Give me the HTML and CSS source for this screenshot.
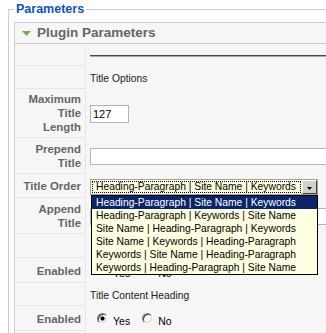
FILE: index.html
```html
<!DOCTYPE html>
<html>
<head>
<meta charset="utf-8">
<link rel="stylesheet" href="styles.css">
</head>
<body>
<fieldset class="params-fieldset">
  <legend class="params-legend">Parameters</legend>
  <div class="panel">
    <h3 class="panel-title">
      <svg class="panel-arrow" width="9" height="5" viewBox="0 0 9 5"><polygon points="0,0 9,0 4.5,5" fill="#6fb24c"/></svg>
      <span>Plugin Parameters</span>
    </h3>
    <div class="paramlist">
      <div class="param param--rule">
        <div class="param-key"></div>
        <div class="param-value"><hr class="param-hr"></div>
      </div>
      <div class="param">
        <div class="param-key"></div>
        <div class="param-value">Title Options</div>
      </div>
      <div class="param param--tall">
        <div class="param-key">Maximum Title Length</div>
        <div class="param-value"><input class="text-input text-input--short" type="text" value="127"></div>
      </div>
      <div class="param">
        <div class="param-key">Prepend Title</div>
        <div class="param-value"><input class="text-input text-input--long" type="text" value=""></div>
      </div>
      <div class="param param--field">
        <div class="param-key">Title Order</div>
        <div class="param-value">
          <div class="select">
            <span class="select-value">Heading-Paragraph | Site Name | Keywords</span>
            <span class="select-btn"><svg width="5" height="3" viewBox="0 0 5 3"><polygon points="0,0 5,0 2.5,3" fill="#000"/></svg></span>
            <ul class="select-list">
              <li class="select-option select-option--active">Heading-Paragraph | Site Name | Keywords</li>
              <li class="select-option">Heading-Paragraph | Keywords | Site Name</li>
              <li class="select-option">Site Name | Heading-Paragraph | Keywords</li>
              <li class="select-option">Site Name | Keywords | Heading-Paragraph</li>
              <li class="select-option">Keywords | Site Name | Heading-Paragraph</li>
              <li class="select-option">Keywords | Heading-Paragraph | Site Name</li>
            </ul>
          </div>
        </div>
      </div>
      <div class="param">
        <div class="param-key">Append Title</div>
        <div class="param-value"><input class="text-input text-input--long" type="text" value=""></div>
      </div>
      <div class="param param--field">
        <div class="param-key"></div>
        <div class="param-value"></div>
      </div>
      <div class="param param--choice">
        <div class="param-key">Enabled</div>
        <div class="param-value">
          <div class="radio-group">
            <input class="radio" type="radio" name="en1" checked><span class="radio-label">Yes</span>
            <input class="radio" type="radio" name="en1"><span class="radio-label">No</span>
          </div>
        </div>
      </div>
      <div class="param">
        <div class="param-key"></div>
        <div class="param-value">Title Content Heading</div>
      </div>
      <div class="param param--choice">
        <div class="param-key">Enabled</div>
        <div class="param-value">
          <div class="radio-group">
            <input class="radio" type="radio" name="en2" checked><span class="radio-label">Yes</span>
            <input class="radio" type="radio" name="en2"><span class="radio-label">No</span>
          </div>
        </div>
      </div>
      <div class="param">
        <div class="param-key"></div>
        <div class="param-value"></div>
      </div>
    </div>
  </div>
</fieldset>
</body>
</html>
```

FILE: styles.css
```css
html, body {
  margin: 0;
  padding: 0;
  background: #fff;
}

body {
  overflow: hidden;
  font-family: "Liberation Sans", Arial, sans-serif;
  font-size: 10.3px;
  color: #222;
}

.params-fieldset {
  margin: 2px 0 0 8px;
  padding: 5px;
  border: 1px solid #ccc;
  width: 420px;
  min-width: 0;
}

.params-legend {
  padding: 0 2px;
  font-size: 12.5px;
  line-height: 15px;
  font-weight: bold;
  color: #0b55c4;
}

.panel {
  border: 1px solid #ccc;
}

.panel-title {
  margin: 0;
  height: 20px;
  display: flex;
  align-items: center;
  padding-left: 7px;
  background: #f6f6f6;
  border-bottom: 1px solid #ccc;
  font-size: 13.5px;
  line-height: 20px;
  font-weight: bold;
  color: #666;
}

.panel-arrow {
  flex: none;
  margin-right: 6px;
}

.paramlist {
  display: flex;
  flex-direction: column;
  gap: 1px;
  padding: 1px;
  background: #f6f6f6;
}

.param {
  display: flex;
  min-height: 22px;
}

.param--rule { min-height: 21px; }
.param--field { min-height: 23px; }
.param--choice { min-height: 24px; }

.param-key {
  flex: none;
  width: 70px;
  box-sizing: border-box;
  padding: 3px 4px 3px 2px;
  display: flex;
  align-items: center;
  justify-content: flex-end;
  text-align: right;
  font-size: 11.4px;
  line-height: 14px;
  font-weight: bold;
  color: #666;
  background: #f6f6f6;
  border-right: 1px solid #e6e6e6;
  border-bottom: 1px solid #e6e6e6;
}

.param--tall .param-key {
  padding-top: 2px;
}

.param-value {
  flex: 1;
  display: flex;
  align-items: center;
  padding: 0 4px;
  white-space: nowrap;
}

.param-hr {
  width: 100%;
  height: 0;
  margin: 0;
  border: 0;
  border-top: 1px solid #4a4a4a;
  border-bottom: 1px solid #aaa;
}

.text-input {
  box-sizing: border-box;
  height: 17px;
  margin: 0;
  padding: 0 2px;
  border: 1px solid #b4b4b4;
  background: #fff;
  font-family: "Liberation Sans", Arial, sans-serif;
  font-size: 11px;
  color: #000;
  outline: none;
}

.text-input--short {
  width: 39px;
  height: 18px;
}

.text-input--long {
  width: 280px;
}

.select {
  position: relative;
  display: flex;
  width: 228px;
  height: 16px;
  box-sizing: border-box;
  border: 1px solid #a0a0a0;
  background: #ffffe1;
}

.select-value {
  flex: 1;
  margin: 1px;
  padding-left: 3px;
  border: 1px dotted #000;
  font-size: 10.3px;
  line-height: 10px;
  color: #000;
  overflow: hidden;
}

.select-btn {
  flex: none;
  width: 15px;
  box-sizing: border-box;
  display: flex;
  align-items: center;
  justify-content: center;
  padding-top: 3px;
  background: #d4d0c8;
  border: 1px solid;
  border-color: #fff #404040 #404040 #fff;
}

.select-list {
  position: absolute;
  top: 15px;
  left: 0;
  z-index: 2;
  width: 227px;
  box-sizing: border-box;
  margin: 0;
  padding: 0;
  list-style: none;
  border: 1px solid #000;
  background: #ffffe1;
}

.select-option {
  height: 13px;
  line-height: 13px;
  padding-left: 4px;
  font-size: 10.3px;
  color: #000;
  white-space: nowrap;
}

.select-option--active {
  background: #0a246a;
  color: #fff;
}

.radio-group {
  display: flex;
  align-items: center;
  padding-left: 7px;
}

.radio {
  -webkit-appearance: none;
  appearance: none;
  flex: none;
  width: 11px;
  height: 11px;
  margin: 0 0 1px 0;
  box-sizing: border-box;
  border-radius: 50%;
  border: 1px solid;
  border-color: #808080 #fff #fff #808080;
  box-shadow: inset 1px 1px 0 #404040, inset -1px -1px 0 #d4d0c8;
  background: #fff;
}

.radio:checked {
  background: radial-gradient(circle, #000 0 1.8px, #fff 2.4px);
}

.radio-label {
  margin: 4px 12px 0 5px;
  font-size: 10.5px;
  line-height: 12px;
  color: #000;
}
```
